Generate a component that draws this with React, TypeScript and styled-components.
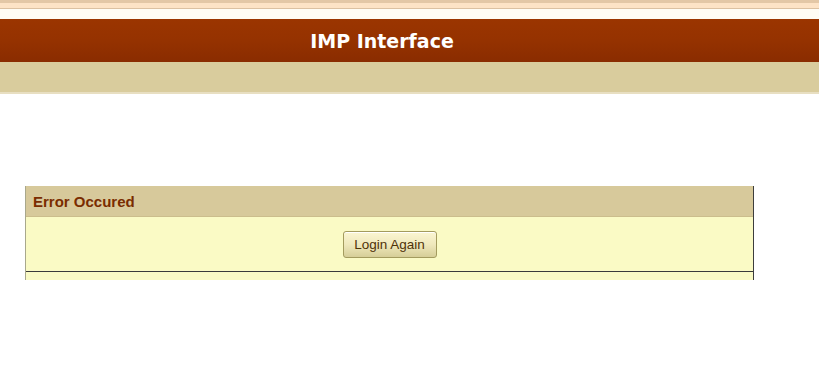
import styled, {createGlobalStyle} from "styled-components";
import {FC} from "react";

const GlobalStyles = createGlobalStyle`
  html, body {
    margin: 0;
    padding: 0;
    background: #ffffff;
    font-family: "Liberation Sans", Arial, sans-serif;
  }
`;

const Page = styled.div`
  display: flex;
  flex-direction: column;
  width: 100%;
`;

const Stripe = styled.div<{ $h: number; $c: string }>`
  height: ${p => p.$h}px;
  background: ${p => p.$c};
`;

const TitleBar = styled.div`
  height: 43px;
  background: linear-gradient(to bottom, #9b3500 0%, #953200 50%, #8a2c00 100%);
  display: flex;
  align-items: center;
`;

const Title = styled.h1`
  margin: 0;
  width: 764px;
  text-align: center;
  color: #ffffff;
  font-family: "DejaVu Sans", Verdana, sans-serif;
  font-size: 19px;
  font-weight: bold;
`;

const SubBar = styled.div`
  height: 30px;
  background: #d9cc9d;
  border-bottom: 2px solid #e8dfc2;
`;

const Main = styled.div`
  padding: 92px 0 0 25px;
`;

const Panel = styled.div`
  width: 727px;
  border-left: 1px solid #a9a88c;
  border-right: 1px solid #3d3d3d;
  display: flex;
  flex-direction: column;
`;

const PanelHeader = styled.div`
  height: 30px;
  background: #d7c99b;
  border-bottom: 1px solid #cbbd8c;
  display: flex;
  align-items: center;
  padding-left: 7px;
  color: #7a2c00;
  font-size: 15px;
  font-weight: bold;
`;

const PanelBody = styled.div`
  background: #fafac5;
  display: flex;
  justify-content: center;
  padding: 14px 0 13px;
  border-bottom: 1px solid #3a3a3a;
`;

const PanelFooter = styled.div`
  height: 8px;
  background: #fafac5;
`;

const Button = styled.button`
  height: 27px;
  width: 94px;
  padding: 0;
  border: 1px solid #a39b5e;
  border-radius: 3px;
  background: linear-gradient(to bottom, #fbf6d2 0%, #efe8bc 50%, #d6ce98 100%);
  box-shadow: inset 0 1px 0 #ffffff;
  color: #4f3208;
  font-family: "Liberation Sans", Arial, sans-serif;
  font-size: 13.5px;
  cursor: pointer;
`;

const App: FC = () => {
    return <>
        <GlobalStyles/>
        <Page>
            <Stripe $h={3} $c="#e3c7a6"/>
            <Stripe $h={5} $c="#fde3c6"/>
            <Stripe $h={1} $c="#dcc1a2"/>
            <Stripe $h={10} $c="#fffcf4"/>
            <TitleBar>
                <Title>IMP Interface</Title>
            </TitleBar>
            <SubBar/>
            <Main>
                <Panel>
                    <PanelHeader>Error Occured</PanelHeader>
                    <PanelBody>
                        <Button>Login Again</Button>
                    </PanelBody>
                    <PanelFooter/>
                </Panel>
            </Main>
        </Page>
    </>;
};

export default App;
